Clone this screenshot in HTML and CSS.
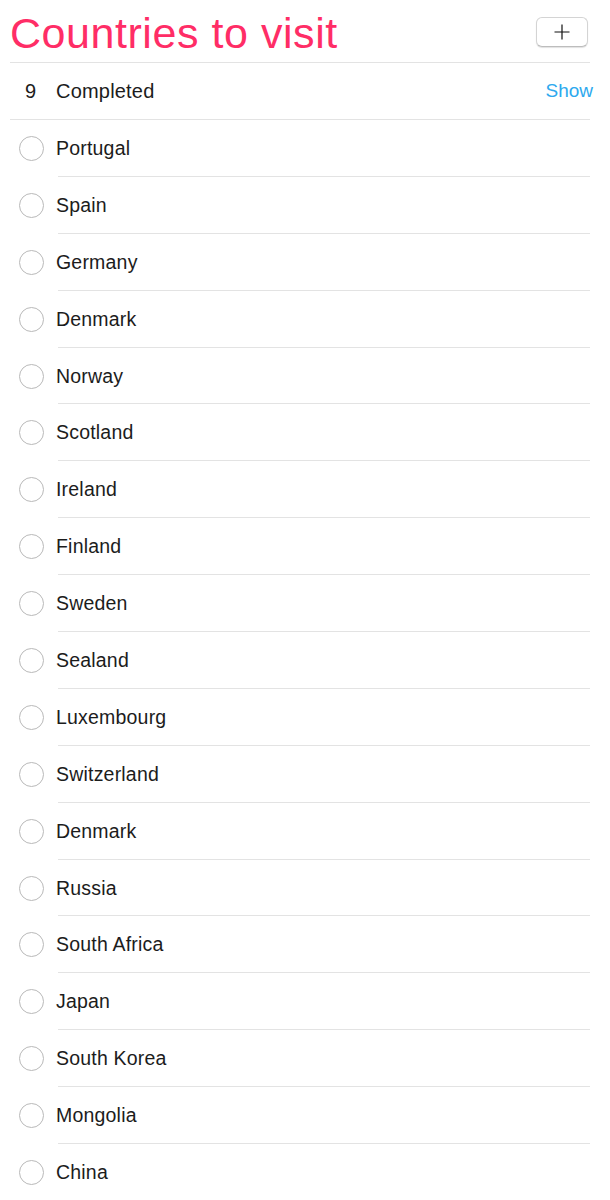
FILE: index.html
```html
<!DOCTYPE html>
<html lang="en">
<head>
<meta charset="utf-8">
<title>Countries to visit</title>
<link rel="stylesheet" href="styles.css">
</head>
<body>
<div class="app">
  <header class="header">
    <h1 class="title">Countries to visit</h1>
    <button class="add-btn" aria-label="Add">
      <svg width="16" height="16" viewBox="0 0 16 16"><path d="M8 0.5V15.5M0.5 8H15.5" stroke="#111" stroke-width="1.2" fill="none"/></svg>
    </button>
  </header>
  <div class="completed">
    <span class="count">9</span>
    <span class="completed-label">Completed</span>
    <span class="show">Show</span>
  </div>
  <ul class="list">
    <li class="item"><span class="check"></span><span class="name">Portugal</span></li>
    <li class="item"><span class="check"></span><span class="name">Spain</span></li>
    <li class="item"><span class="check"></span><span class="name">Germany</span></li>
    <li class="item"><span class="check"></span><span class="name">Denmark</span></li>
    <li class="item"><span class="check"></span><span class="name">Norway</span></li>
    <li class="item"><span class="check"></span><span class="name">Scotland</span></li>
    <li class="item"><span class="check"></span><span class="name">Ireland</span></li>
    <li class="item"><span class="check"></span><span class="name">Finland</span></li>
    <li class="item"><span class="check"></span><span class="name">Sweden</span></li>
    <li class="item"><span class="check"></span><span class="name">Sealand</span></li>
    <li class="item"><span class="check"></span><span class="name">Luxembourg</span></li>
    <li class="item"><span class="check"></span><span class="name">Switzerland</span></li>
    <li class="item"><span class="check"></span><span class="name">Denmark</span></li>
    <li class="item"><span class="check"></span><span class="name">Russia</span></li>
    <li class="item"><span class="check"></span><span class="name">South Africa</span></li>
    <li class="item"><span class="check"></span><span class="name">Japan</span></li>
    <li class="item"><span class="check"></span><span class="name">South Korea</span></li>
    <li class="item"><span class="check"></span><span class="name">Mongolia</span></li>
    <li class="item"><span class="check"></span><span class="name">China</span></li>
  </ul>
</div>
</body>
</html>
```

FILE: styles.css
```css
* { box-sizing: border-box; }
html, body { margin: 0; padding: 0; background: #fff; }
body {
  font-family: "Liberation Sans", Arial, sans-serif;
  color: #1c1c1c;
  overflow: hidden;
}
.app {
  padding: 0 20px 0 10px;
}
.header {
  height: 63px;
  display: flex;
  align-items: flex-start;
  justify-content: space-between;
  border-bottom: 1px solid #e3e3e3;
}
.title {
  margin: 0;
  margin-top: 8px;
  font-weight: normal;
  font-size: 43px;
  line-height: 50px;
  letter-spacing: 0.55px;
  color: #ff2d66;
}
.add-btn {
  margin-top: 17px;
  margin-right: 2px;
  width: 52px;
  height: 30px;
  border: 1px solid #d4d4d4;
  border-bottom-color: #bdbdbd;
  border-radius: 6px;
  background: #fff;
  box-shadow: 0 1px 1px rgba(0,0,0,0.12);
  display: flex;
  align-items: center;
  justify-content: center;
  padding: 0;
}
.add-btn svg { display: block; }
.completed {
  height: 57px;
  display: flex;
  align-items: center;
  border-bottom: 1px solid #e3e3e3;
  font-size: 20px;
}
.count {
  width: 46px;
  padding-left: 15px;
}
.completed-label { flex: 1; letter-spacing: 0.2px; }
.show {
  color: #2ea9ee;
  font-size: 19px;
  margin-right: -3px;
}
.list {
  list-style: none;
  margin: 0;
  padding: 0;
}
.item {
  height: 56.9px;
  display: flex;
  align-items: center;
  position: relative;
  font-size: 19.5px;
}
.item::after {
  content: "";
  position: absolute;
  left: 48px;
  right: 0;
  bottom: 0;
  border-bottom: 1px solid #e3e3e3;
}
.check {
  width: 25px;
  height: 25px;
  border: 1.5px solid #b9b9b9;
  border-radius: 50%;
  margin-left: 9px;
  margin-right: 12px;
  flex: none;
}
.name { letter-spacing: 0.2px; }
```
